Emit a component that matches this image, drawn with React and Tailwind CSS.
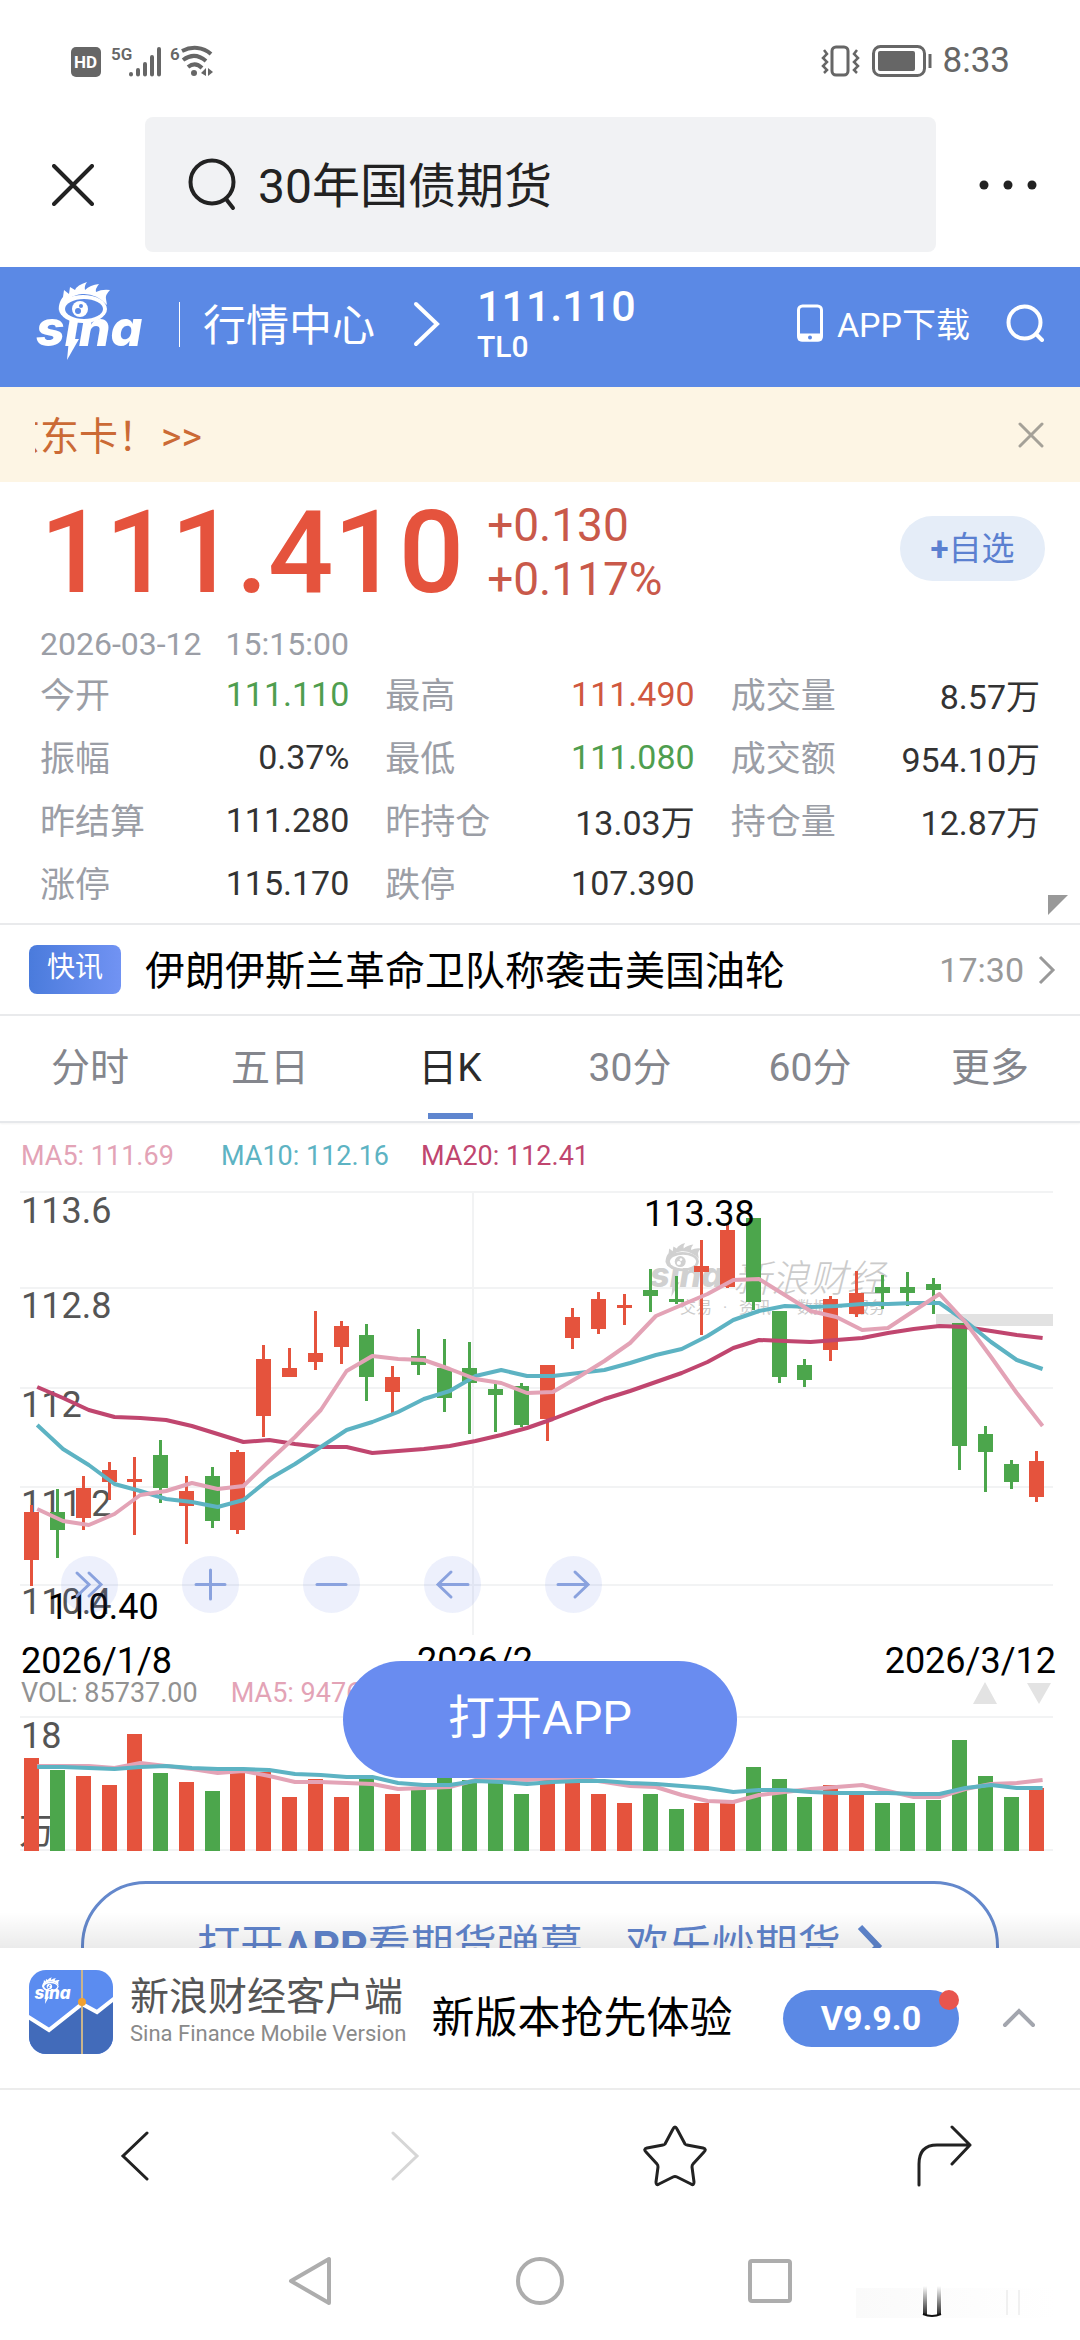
import { useState } from "react";

const RED = "#e5533d";
const GREEN = "#4ca64c";

// one row per day: [up/down, high, body top, body bottom, low, volume top]
const candles = [
  ["r", 333, 340, 388, 414, 48],
  ["g", 317, 340, 358, 386, 60],
  ["r", 304, 316, 346, 358, 66],
  ["r", 290, 298, 310, 328, 75],
  ["r", 285, 307, 310, 363, 24],
  ["g", 268, 283, 316, 331, 63],
  ["r", 304, 319, 334, 372, 72],
  ["g", 295, 304, 349, 356, 81],
  ["r", 278, 280, 358, 362, 62],
  ["r", 173, 187, 244, 265, 62],
  ["r", 176, 196, 205, 205, 87],
  ["r", 139, 181, 190, 198, 69],
  ["r", 149, 154, 175, 192, 87],
  ["g", 152, 163, 205, 229, 68],
  ["r", 194, 205, 220, 241, 84],
  ["g", 157, 184, 193, 203, 79],
  ["g", 167, 196, 226, 240, 67],
  ["g", 170, 196, 211, 262, 70],
  ["g", 212, 217, 223, 260, 72],
  ["g", 211, 214, 253, 255, 84],
  ["r", 193, 193, 247, 269, 70],
  ["r", 136, 145, 166, 177, 65],
  ["r", 120, 127, 157, 162, 84],
  ["r", 122, 133, 136, 153, 93],
  ["g", 97, 118, 124, 140, 84],
  ["g", 104, 127, 130, 132, 99],
  ["r", 68, 94, 100, 163, 93],
  ["r", 51, 58, 115, 116, 93],
  ["g", 46, 46, 130, 138, 57],
  ["g", 139, 139, 205, 211, 69],
  ["g", 187, 193, 208, 215, 87],
  ["r", 124, 127, 178, 189, 75],
  ["r", 99, 121, 142, 145, 85],
  ["g", 103, 115, 121, 137, 93],
  ["g", 100, 115, 121, 134, 93],
  ["g", 106, 112, 118, 142, 90],
  ["g", 151, 151, 274, 298, 30],
  ["g", 254, 262, 280, 320, 66],
  ["g", 288, 292, 310, 317, 87],
  ["r", 279, 289, 325, 330, 78],
];

const ma5 = [337, 349, 353, 342, 323, 319, 311, 317, 314, 289, 265, 238, 199, 184, 187, 188, 197, 207, 211, 221, 220, 205, 189, 171, 144, 133, 122, 108, 107, 123, 139, 145, 158, 156, 139, 122, 150, 185, 221, 254];
const ma10 = [253, 277, 293, 312, 319, 327, 330, 335, 328, 307, 292, 275, 258, 250, 240, 227, 219, 204, 198, 204, 204, 201, 198, 191, 183, 177, 164, 148, 139, 134, 135, 134, 132, 132, 131, 131, 149, 170, 188, 197];
const ma20 = [215, 226, 238, 245, 246, 248, 254, 262, 270, 268, 272, 275, 275, 281, 279, 277, 274, 269, 263, 256, 247, 237, 227, 219, 210, 201, 190, 176, 168, 169, 170, 168, 166, 161, 157, 154, 155, 159, 163, 166];
const volMa5 = [56, 56, 56, 58, 53, 56, 59, 63, 61, 66, 72, 72, 73, 74, 79, 78, 77, 70, 69, 70, 68, 68, 72, 76, 77, 85, 91, 92, 85, 82, 79, 77, 75, 81, 87, 87, 79, 74, 73, 70];
const volMa10 = [57, 57, 58, 59, 57, 56, 58, 59, 59, 60, 64, 65, 67, 67, 73, 75, 75, 71, 72, 74, 72, 71, 71, 73, 74, 76, 78, 82, 80, 80, 82, 83, 83, 83, 84, 84, 78, 75, 78, 78];

const quotes = [
  ["今开", "111.110", "text-[#4f9e4f]"],
  ["最高", "111.490", "text-[#d0583f]"],
  ["成交量", "8.57万", "text-[#333]"],
  ["振幅", "0.37%", "text-[#333]"],
  ["最低", "111.080", "text-[#4f9e4f]"],
  ["成交额", "954.10万", "text-[#333]"],
  ["昨结算", "111.280", "text-[#333]"],
  ["昨持仓", "13.03万", "text-[#333]"],
  ["持仓量", "12.87万", "text-[#333]"],
  ["涨停", "115.170", "text-[#333]"],
  ["跌停", "107.390", "text-[#333]"],
];

const tabs = ["分时", "五日", "日K", "30分", "60分", "更多"];

const candleX = (i) => Math.round(31.3 + i * 25.77);
const linePoints = (data) =>
  data.map((y, i) => `${(37.2 + i * 25.78).toFixed(1)},${y}`).join(" ");

const SinaLogo = ({ back = "#5b89e5", ...props }) => (
  <svg viewBox="0 0 112 82" role="img" aria-label="sina" {...props}>
    <path
      d="M23 30C22 24 25 18 27 16L28 9L33 13L34 6L39 9Q41 4 51 1Q48 5 49 9Q54 4 63 3Q59 8 60 11Q66 8 74 9Q69 14 70 18L71 24Q60 12 46 13Q32 14 23 30Z"
      fill="currentColor"
    />
    <ellipse cx="47" cy="28" rx="24" ry="14" fill="currentColor" />
    <ellipse cx="48" cy="28" rx="19" ry="10" fill={back} />
    <circle cx="44" cy="28" r="8" fill="currentColor" />
    <circle cx="42" cy="30" r="3" fill={back} />
    <circle cx="45" cy="25" r="2" fill={back} />
    <text x="0" y="65" fontSize="50" fontWeight="800" fontStyle="italic" fontFamily="Inter, sans-serif" fill="currentColor">
      sına
    </text>
    <path d="M33 58H43L31 79Z" fill="currentColor" />
  </svg>
);

const StatusBar = () => (
  <div className="flex h-[105px] items-start justify-between pt-10 pr-[70px] pl-[71px] text-[#666]">
    <svg width="142" height="34" viewBox="0 0 142 34" className="mt-[5px]" aria-label="HD 5G">
      <rect x="0" y="2" width="30" height="30" rx="5" fill="#666" />
      <text x="3" y="23" fontSize="17" fontWeight="700" fontFamily="Roboto" fill="#fff">HD</text>
      <text x="40" y="15" fontSize="17" fontWeight="600" fontFamily="Roboto" fill="#666">5G</text>
      <path d="M60 29V29.5M67 25V29.5M74 19V29.5M81 12V29.5M88 4V29.5" stroke="#666" strokeWidth="4" strokeLinecap="round" />
      <text x="99" y="15" fontSize="17" fontWeight="600" fontFamily="Roboto" fill="#666">6</text>
      <path d="M111 6C121 1 132 2 140 9M112 15C120 9 128 10 135 16M117 22C122 18 127 19 131 23" fill="none" stroke="#666" strokeWidth="4" />
      <circle cx="123" cy="28" r="3" fill="#666" />
      <path d="M135 23V31L130 28ZM137 23V31L142 27Z" fill="#666" />
    </svg>
    <div className="flex items-center gap-[10px]">
      <svg width="112" height="34" viewBox="0 0 112 34" fill="none" stroke="#666" strokeWidth="3">
        <rect x="11" y="3" width="16" height="28" rx="4" />
        <path d="M3 6L6 10L2 14L6 18L2 22L6 26L3 29M36 6L33 10L37 14L33 18L37 22L33 26L36 29" strokeWidth="2.5" />
        <rect x="52.500" y="2.500" width="51" height="29" rx="7" />
        <rect x="57" y="7" width="37" height="20" rx="2" fill="#666" stroke="none" />
        <path d="M109 10V24" />
      </svg>
      <span className="text-[35px] leading-[42px]">8:33</span>
    </div>
  </div>
);

const SearchHeader = () => (
  <div className="flex h-[162px] items-start pt-3">
    <button className="flex h-[135px] w-[145px] items-center justify-center" aria-label="关闭">
      <svg width="42" height="42" viewBox="0 0 42 42" stroke="#222" strokeWidth="4" strokeLinecap="round">
        <path d="M2 2L40 40M40 2L2 40" />
      </svg>
    </button>
    <label className="flex h-[135px] min-w-0 flex-1 items-center gap-5 rounded-lg bg-[#f1f2f4] pl-[43px]">
      <svg width="50" height="54" viewBox="0 0 50 54" fill="none" stroke="#222" strokeWidth="4" strokeLinecap="round" className="shrink-0">
        <circle cx="24" cy="24" r="21.500" />
        <path d="M38 41L45 50" />
      </svg>
      <input
        type="text"
        aria-label="搜索"
        defaultValue="30年国债期货"
        className="min-w-0 flex-1 bg-transparent pt-1 text-[48px] leading-[60px] text-[#222] outline-none"
      />
    </label>
    <button className="flex h-[135px] w-36 items-center justify-center" aria-label="菜单">
      <svg width="60" height="12" viewBox="0 0 60 12" fill="#222">
        <circle cx="6" cy="6" r="4.500" />
        <circle cx="30" cy="6" r="4.500" />
        <circle cx="54" cy="6" r="4.500" />
      </svg>
    </button>
  </div>
);

const SiteHeader = () => (
  <header className="flex h-[120px] items-start bg-[#5b89e5] pr-9 pl-9 text-white">
    <a href="#home" className="mt-[14px]">
      <SinaLogo className="h-[82px] w-[112px]" />
    </a>
    <div className="mt-[35px] ml-[31px] h-[45px] w-px bg-white" />
    <a href="#market" className="mt-[29px] ml-[23px] text-[43px] leading-[60px]">
      行情中心
    </a>
    <svg width="28" height="48" viewBox="0 0 28 48" fill="none" stroke="#fff" strokeWidth="4" strokeLinecap="round" className="mt-[33px] ml-[37px]">
      <path d="M4 4L25 24L4 44" />
    </svg>
    <div className="mt-[18px] ml-[37px] flex flex-col font-medium">
      <span className="text-[43px] leading-[42px]">111.110</span>
      <span className="text-[30px] leading-[40px]">TL0</span>
    </div>
    <a href="#download" className="mt-[33px] ml-auto flex items-center gap-[14px] text-[34px] leading-[50px]">
      <svg width="26" height="38" viewBox="0 0 26 38" fill="none" stroke="#fff" strokeWidth="3" className="-mt-1">
        <rect x="1.500" y="2" width="23" height="34" rx="4" />
        <path d="M2 31H24V34Q24 36 21 36H5Q2 36 2 34Z" fill="#fff" />
        <circle cx="13" cy="33.500" r="2" fill="#5b89e5" stroke="none" />
      </svg>
      APP下载
    </a>
    <button className="mt-[37px] ml-9" aria-label="搜索">
      <svg width="38" height="38" viewBox="0 0 38 38" fill="none" stroke="#fff" strokeWidth="4" strokeLinecap="round">
        <circle cx="18.500" cy="18.500" r="16" />
        <path d="M30 30L36 36" />
      </svg>
    </button>
  </header>
);

const Notice = () => (
  <div className="flex h-[95px] items-center justify-between bg-[#fdf5e4] pr-9 pl-[35px]">
    <div className="overflow-hidden pt-1">
      <a href="#notice" className="-ml-[34px] flex gap-1 text-[39px] leading-[60px] text-[#cb6a35]">
        京东卡！<span>&gt;&gt;</span>
      </a>
    </div>
    <button aria-label="关闭公告">
      <svg width="26" height="26" viewBox="0 0 26 26" stroke="#a5a198" strokeWidth="3" strokeLinecap="round">
        <path d="M2 2L24 24M24 2L2 24" />
      </svg>
    </button>
  </div>
);

const Quote = () => (
  <section className="flex flex-col px-10 pt-[11px]">
    <div className="flex items-start">
      <span className="text-[115px] leading-[120px] font-medium text-[#e5533d]">111.410</span>
      <div className="mt-[5px] ml-[23px] flex flex-col text-[46px] leading-[54px] text-[#c9594a]">
        <span>+0.130</span>
        <span>+0.117%</span>
      </div>
      <button className="-mr-[5px] mt-[23px] ml-auto flex h-[65px] w-[145px] items-center justify-center rounded-full bg-[#e5edf8] text-[33px] leading-[40px] text-[#5b80d0]">
        <b>+</b>自选
      </button>
    </div>
    <p className="mt-[11px] flex gap-6 text-[32px] leading-[40px] text-[#9b9ea6]">
      <span>2026-03-12</span>
      <span>15:15:00</span>
    </p>
    <dl className="mt-[2px] grid grid-cols-3 gap-x-9 text-[34px]">
      {quotes.map(([name, value, color]) => (
        <div key={name} className="flex h-[63px] items-start justify-between">
          <dt className="text-[35px] leading-[62px] text-[#9b9ea6]">{name}</dt>
          <dd className={`${color} ${value.includes("万") ? "leading-[62px]" : "leading-[56px]"}`}>{value}</dd>
        </div>
      ))}
    </dl>
  </section>
);

const News = () => (
  <a href="#news" className="relative mt-[5px] flex h-[93px] items-center border-y-2 border-[#e9eaec] pr-6 pl-[29px]">
    <svg width="20" height="20" viewBox="0 0 20 20" className="absolute -top-[30px] right-3">
      <path d="M0 0H20L0 20Z" fill="#999" />
    </svg>
    <span className="flex h-[49px] w-[92px] items-center justify-center rounded-lg bg-linear-to-r from-[#4a7bdc] to-[#7193f3] pb-1 text-[28px] leading-[36px] text-white">
      快讯
    </span>
    <span className="ml-6 pt-1 text-[40px] leading-[56px] text-black">伊朗伊斯兰革命卫队称袭击美国油轮</span>
    <span className="ml-auto text-[34px] leading-[44px] text-[#999]">17:30</span>
    <svg width="18" height="30" viewBox="0 0 18 30" fill="none" stroke="#999" strokeWidth="3" className="ml-[14px]">
      <path d="M2 2L15 15L2 28" />
    </svg>
  </a>
);

const KlineTabs = () => {
  const [active, setActive] = useState("日K");
  return (
    <nav className="flex h-[107px] border-b-2 border-[#e6e8eb] shadow-xs">
      {tabs.map((tab) => (
        <button
          key={tab}
          onClick={() => setActive(tab)}
          className={`flex flex-1 flex-col items-center justify-between pt-[22px] pb-[2px] text-[39px] leading-[60px] ${
            tab === active ? "text-[#2b2b2b]" : "text-[#84868d]"
          }`}
        >
          {tab}
          <span className={`h-[6px] w-[45px] ${tab === active ? "bg-[#5f86cf]" : ""}`} />
        </button>
      ))}
    </nav>
  );
};

const toolIcons = [
  ["展开", "M16 17L28 28.500L16 40M28 17L40 28.500L28 40"],
  ["放大", "M28.500 14V43M14 28.500H43"],
  ["缩小", "M14 28.500H43"],
  ["左移", "M44 28.500H14M27 16L14 28.500L27 41"],
  ["右移", "M13 28.500H43M30 16L43 28.500L30 41"],
];

const KlineChart = () => (
  <div className="relative">
    <svg viewBox="0 0 1080 508" className="block w-full" fontFamily="Roboto, 'Noto Sans CJK SC', sans-serif">
      <g stroke="#f2f3f4" strokeWidth="2">
        {[20, 116, 216, 315, 413].map((y) => (
          <path key={y} d={`M20 ${y}H1053`} />
        ))}
        <path d="M473 20V463" />
      </g>
      <SinaLogo x="650" y="70" width="77" height="57" color="#d0d0d0" back="#fff" />
      <g fill="#cbcbcb">
        <text x="733" y="120" fontSize="38" fontStyle="italic" fontWeight="300">新浪财经</text>
        <g fontSize="16">
          <text x="680" y="141">交易</text>
          <text x="723" y="141">·</text>
          <text x="739" y="141">资讯</text>
          <text x="782" y="141">·</text>
          <text x="797" y="141">数据</text>
          <text x="839" y="141">·</text>
          <text x="853" y="141">服务</text>
        </g>
      </g>
      <rect x="936" y="142" width="117" height="12" fill="#e2e2e2" />
      <g fontSize="36" fill="#555">
        <text x="21" y="51">113.6</text>
        <text x="21" y="146">112.8</text>
        <text x="21" y="245">112</text>
        <text x="21" y="344">111.2</text>
        <text x="21" y="442">110.4</text>
      </g>
      {candles.map(([dir, high, top, bottom, low], i) => (
        <g key={i} fill={dir === "r" ? RED : GREEN}>
          <rect x={candleX(i) - 1} y={high} width="3" height={low - high} />
          <rect x={candleX(i) - 7} y={top} width="15" height={bottom - top} />
        </g>
      ))}
      <g fill="none" strokeWidth="4" strokeLinejoin="round">
        <polyline points={linePoints(ma20)} stroke="#c0466f" />
        <polyline points={linePoints(ma10)} stroke="#5db3c3" />
        <polyline points={linePoints(ma5)} stroke="#e3a3b6" />
      </g>
      <g fontSize="36" fill="#000">
        <text x="644" y="54">113.38</text>
        <text x="48" y="447">110.40</text>
        <text x="21" y="501">2026/1/8</text>
        <text x="475" y="501" textAnchor="middle">2026/2</text>
        <text x="1056" y="501" textAnchor="end">2026/3/12</text>
      </g>
    </svg>
    <div className="absolute bottom-[67px] left-[61px] flex gap-16">
      {toolIcons.map(([name, d]) => (
        <button key={name} aria-label={name} className="size-[57px] rounded-full bg-[#4a70dd]/10">
          <svg viewBox="0 0 57 57" fill="none" stroke="#8aa2de" strokeWidth="3" strokeLinecap="round">
            <path d={d} />
          </svg>
        </button>
      ))}
    </div>
  </div>
);

const VolumeChart = () => (
  <svg viewBox="0 0 1080 146" className="block w-full" fontFamily="Roboto, 'Noto Sans CJK SC', sans-serif">
    <path d="M20 7H1053M20 140H1053" stroke="#f2f3f4" strokeWidth="2" />
    <g fontSize="36" fill="#555">
      <text x="21" y="38">18</text>
      <text x="19" y="134">万</text>
    </g>
    {candles.map(([dir, , , , , top], i) => (
      <rect key={i} x={candleX(i) - 7} y={top} width="15" height={141 - top} fill={dir === "r" ? RED : GREEN} />
    ))}
    <g fill="none" strokeWidth="4" strokeLinejoin="round">
      <polyline points={linePoints(volMa5)} stroke="#e3a3b6" />
      <polyline points={linePoints(volMa10)} stroke="#5db3c3" />
    </g>
  </svg>
);

const AppBar = () => (
  <div className="flex h-[142px] items-center border-b-2 border-[#ececec] bg-white pr-11 pl-[29px]">
    <div className="mb-3 flex items-center gap-[17px]">
      <svg width="84" height="84" viewBox="0 0 84 84" className="shrink-0">
        <defs>
          <clipPath id="appIcon">
            <rect width="84" height="84" rx="17" />
          </clipPath>
        </defs>
        <g clipPath="url(#appIcon)">
          <rect width="84" height="84" fill="#5b8cf0" />
          <path d="M0 47L20 60L53 34L68 42L84 30V84H0Z" fill="#426bba" />
          <path d="M-2 46L20 60L53 34L68 42L86 28" fill="none" stroke="#fff" strokeWidth="4" />
          <path d="M53 0V84" stroke="#c9b48c" strokeWidth="2" />
          <circle cx="53" cy="32" r="4" fill="#f0a030" />
          <SinaLogo x="5" y="7" width="39" height="28" color="#fff" back="#5b8cf0" />
        </g>
      </svg>
      <div className="flex flex-col">
        <span className="text-[39px] leading-[44px] text-[#555]">新浪财经客户端</span>
        <span className="text-[22px] leading-[30px] text-[#8a8a8a]">Sina Finance Mobile Version</span>
      </div>
    </div>
    <span className="ml-[25px] text-[43px] leading-[60px] text-black">新版本抢先体验</span>
    <button className="relative ml-auto h-[57px] w-44 rounded-full bg-[#5b89e5] text-[34px] leading-[54px] font-bold text-white">
      V9.9.0
      <span className="absolute top-0 right-0 size-5 rounded-full bg-[#e8554e]" />
    </button>
    <button className="ml-[43px]" aria-label="收起">
      <svg width="34" height="20" viewBox="0 0 34 20" fill="none" stroke="#a3a6ae" strokeWidth="4" strokeLinecap="round">
        <path d="M3 17L17 3L31 17" />
      </svg>
    </button>
  </div>
);

const BrowserBar = () => (
  <nav className="grid h-[132px] grid-cols-4 place-items-center">
    <button aria-label="后退">
      <svg width="30" height="50" viewBox="0 0 30 50" fill="none" stroke="#222" strokeWidth="3" strokeLinecap="round">
        <path d="M27 2L3 25L27 48" />
      </svg>
    </button>
    <button aria-label="前进">
      <svg width="30" height="50" viewBox="0 0 30 50" fill="none" stroke="#d6d6d6" strokeWidth="3" strokeLinecap="round">
        <path d="M3 2L27 25L3 48" />
      </svg>
    </button>
    <button aria-label="收藏">
      <svg width="64" height="62" viewBox="0 0 64 62" fill="none" stroke="#222" strokeWidth="3" strokeLinejoin="round">
        <path d="M30 4Q32 0 34 4L42 19Q43 20 44 20L60 23Q64 24 61 27L50 39Q49 40 49 42L51 57Q51 61 48 59L34 52Q32 51 30 52L16 59Q13 61 13 57L15 42Q15 40 14 39L3 27Q0 24 4 23L20 20Q21 20 22 19Z" />
      </svg>
    </button>
    <button aria-label="分享">
      <svg width="56" height="62" viewBox="0 0 56 62" fill="none" stroke="#222" strokeWidth="3" strokeLinecap="round" strokeLinejoin="round">
        <path d="M2 60V39Q2 20 20 20H53M35 2L53 20L35 39" />
      </svg>
    </button>
  </nav>
);

const SystemBar = () => (
  <nav className="relative flex h-[118px] items-center justify-center gap-[184px]">
    <button aria-label="返回">
      <svg width="44" height="50" viewBox="0 0 44 50" fill="none" stroke="#adadad" strokeWidth="4" strokeLinejoin="round">
        <path d="M41 3V47L3 25Z" />
      </svg>
    </button>
    <button aria-label="主页">
      <svg width="48" height="48" viewBox="0 0 48 48" fill="none" stroke="#adadad" strokeWidth="4">
        <circle cx="24" cy="24" r="22" />
      </svg>
    </button>
    <button aria-label="最近任务">
      <svg width="44" height="44" viewBox="0 0 44 44" fill="none" stroke="#adadad" strokeWidth="4">
        <rect x="2" y="2" width="40" height="40" rx="2" />
      </svg>
    </button>
    <svg width="200" height="36" viewBox="0 0 200 36" className="absolute right-6 bottom-5">
      <defs>
        <linearGradient id="fade" x1="0" y1="0" x2="0" y2="1">
          <stop offset="0" stopColor="#000" stopOpacity="0" />
          <stop offset="1" stopColor="#000" stopOpacity="0.85" />
        </linearGradient>
        <linearGradient id="fadeX" x1="0" y1="0" x2="1" y2="0">
          <stop offset="0" stopColor="#fafafa" stopOpacity="1" />
          <stop offset="1" stopColor="#fafafa" stopOpacity="0" />
        </linearGradient>
      </defs>
      <rect x="0" y="4" width="200" height="30" fill="url(#fadeX)" />
      <rect x="66" y="0" width="20" height="34" fill="#fff" />
      <rect x="67" y="2" width="4" height="29" fill="url(#fade)" />
      <rect x="81" y="2" width="4" height="29" fill="url(#fade)" />
      <path d="M67 30Q76 34 85 30" fill="none" stroke="#111" strokeWidth="2" />
      <path d="M151 6V31M163 6V31" stroke="#f0f0f0" strokeWidth="2" />
    </svg>
  </nav>
);

export default function App() {
  return (
    <div className="flex h-screen flex-col overflow-hidden bg-white font-[Roboto,'Noto_Sans_CJK_SC',sans-serif]">
      <StatusBar />
      <SearchHeader />
      <main className="relative min-h-0 flex-1 overflow-hidden">
        <SiteHeader />
        <Notice />
        <Quote />
        <News />
        <KlineTabs />
        <div className="mt-[17px] flex pl-[21px] text-[27px] leading-[32px]">
          <span className="w-[200px] text-[#e3a3b6]">MA5: 111.69</span>
          <span className="w-[200px] text-[#5db3c3]">MA10: 112.16</span>
          <span className="text-[#c0466f]">MA20: 112.41</span>
        </div>
        <KlineChart />
        <div className="mb-1 flex items-center gap-[33px] pr-[29px] pl-[21px] text-[27px] leading-[26px] text-[#929292]">
          <span>VOL: 85737.00</span>
          <span className="text-[#e3a3b6]">MA5: 9476</span>
          <svg width="78" height="22" viewBox="0 0 78 22" fill="#e3e3e3" className="ml-auto">
            <path d="M12 0L24 22H0ZM54 1H78L66 22Z" />
          </svg>
        </div>
        <VolumeChart />
        <a
          href="#open"
          className="mx-[81px] mt-[25px] flex h-[130px] items-center justify-center rounded-full border-3 border-[#6488cc] text-[43px] leading-[60px] text-[#6084cc]"
        >
          <span>
            打开<b>APP</b>看期货弹幕，欢乐炒期货
          </span>
          <svg width="26" height="44" viewBox="0 0 26 44" fill="none" stroke="#5f86cf" strokeWidth="6" className="ml-4">
            <path d="M3 3L21 22L3 41" />
          </svg>
        </a>
        <div className="absolute inset-x-0 bottom-0 h-9 bg-linear-to-t from-black/8 to-transparent" />
        <button className="absolute bottom-[170px] left-1/2 h-[117px] w-[394px] -translate-x-1/2 rounded-full bg-[#698cf0] pb-1 text-[47px] leading-[60px] text-white">
          打开APP
        </button>
      </main>
      <AppBar />
      <BrowserBar />
      <SystemBar />
    </div>
  );
}
